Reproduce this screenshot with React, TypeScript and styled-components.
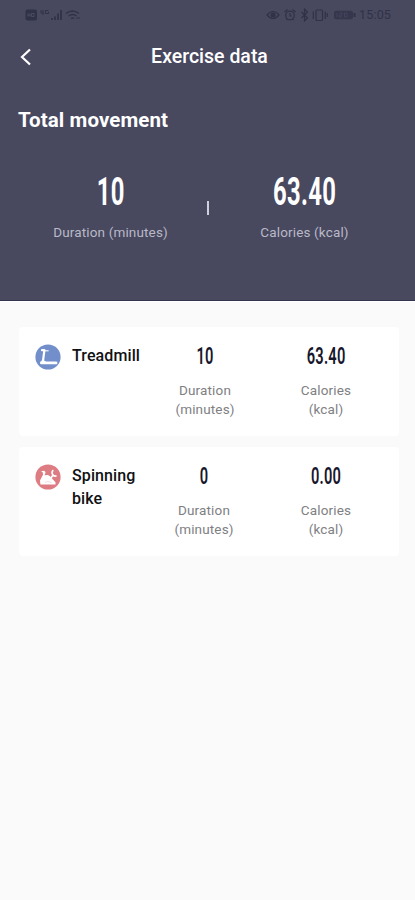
import React from 'react';
import styled, { createGlobalStyle } from 'styled-components';

const Global = createGlobalStyle`
  * { box-sizing: border-box; }
  body { margin: 0; background: #fafafa; font-family: Roboto, "Liberation Sans", sans-serif; }
`;

const Page = styled.main`
  width: 415px;
  height: 900px;
  overflow: hidden;
  background: #fafafa;
`;

const Header = styled.header`
  height: 301px;
  background: #48485f;
  border-bottom: 1px solid #34344f;
  color: #fff;
`;

const StatusBar = styled.div`
  height: 30px;
  padding: 0 24px 0 25px;
  display: flex;
  align-items: center;
  justify-content: space-between;
  color: #303247;
`;

const Clock = styled.span`
  font-size: 12.5px;
  line-height: 30px;
  letter-spacing: 0.15px;
`;

const StatusGroup = styled.div`
  display: flex;
  align-items: center;
`;

const NavBar = styled.nav`
  height: 54px;
  display: grid;
  grid-template-columns: 52px 1fr 48px;
  align-items: center;
`;

const BackButton = styled.button`
  border: 0;
  padding: 0 0 0 19px;
  background: none;
  display: flex;
`;

const Title = styled.h1`
  margin: 0;
  font-size: 19.5px;
  line-height: 26px;
  font-weight: 500;
  text-align: center;
`;

const SectionTitle = styled.h2`
  margin: 22px 0 0 18px;
  font-size: 20.5px;
  line-height: 28px;
  font-weight: 700;
  letter-spacing: 0.1px;
`;

const Totals = styled.div`
  margin-top: 37px;
  padding: 0 16px 0 14px;
  display: grid;
  grid-template-columns: 193px 3px 1fr;
  align-items: center;
`;

const Divider = styled.span`
  width: 2px;
  height: 14px;
  margin-top: 3px;
  background: #d0d0dc;
`;

const Total = styled.div`
  text-align: center;
`;

const Value = styled.div<{ $size: number; $line: number }>`
  font-size: ${(p) => p.$size}px;
  line-height: ${(p) => p.$line}px;
  font-weight: ${(p) => (p.$size > 30 ? 700 : 600)};
  letter-spacing: ${(p) => p.$size * 0.015}px;
  text-indent: ${(p) => p.$size * 0.015}px;
  transform: scaleX(0.61);
`;

const TotalLabel = styled.div`
  margin-top: 10px;
  font-size: 13.5px;
  line-height: 18px;
  letter-spacing: 0.15px;
  color: #b9b9c7;
  white-space: nowrap;
`;

const List = styled.section`
  padding: 25px 16px 0 19px;
  display: flex;
  flex-direction: column;
  gap: 11px;
  border-top: 1px solid #fff;
`;

const Card = styled.article`
  height: 109px;
  padding: 17px 4px 0 16px;
  display: grid;
  grid-template-columns: 37px 79px 106px 1fr;
  border-radius: 4px;
  background: #fff;
`;

const Name = styled.h3`
  margin: 0;
  font-size: 16px;
  line-height: 23px;
  font-weight: 500;
  letter-spacing: 0.1px;
  color: #111114;
`;

const Metric = styled.div<{ $shift?: number }>`
  text-align: center;
  color: #17172c;
  padding-left: ${(p) => p.$shift || 0}px;
`;

const MetricLabel = styled.div`
  margin-top: 13px;
  font-size: 13.5px;
  line-height: 18.5px;
  letter-spacing: 0.15px;
  color: #808083;
`;

const IconBox = styled.div`
  padding-top: 0;
`;

function NetworkIcons() {
  return (
    <svg width="58" height="16" viewBox="0 0 58 16" fill="none" stroke="currentColor">
      <rect x="0.5" y="2.5" width="11.5" height="11" rx="2" fill="currentColor" stroke="none" />
      <path d="M3 6.5v3M5 6.5v3M3 8h2M6.5 9.5v-3h2.5v3z" stroke="#50516a" strokeWidth="0.8" />
      <path d="M16 3v3h2.5M18 3v5M23.5 3.5h-3v3h3V5" strokeWidth="1" />
      <path d="M27 13v-2M30 13V9.5M33 13V6.5M36 13V3" strokeWidth="1.8" />
      <path d="M41 6.5q6.5-5 13 0M43.5 9q4-3 8 0M46 11.5q1.5-1.2 3 0" strokeWidth="1.5" />
      <path d="M52 12v-2M54 10v2" />
    </svg>
  );
}

function DeviceIcons() {
  return (
    <svg width="93" height="16" viewBox="0 0 93 16" fill="none" stroke="currentColor" strokeWidth="1.2">
      <path d="M1 8q6-7 12 0q-6 7-12 0z" />
      <circle cx="7" cy="8" r="2" fill="currentColor" />
      <circle cx="24" cy="8.5" r="4.3" />
      <path d="M18.5 5l3-2.5M29.5 5l-3-2.5M24 6v3h2M20.5 13l1-1M27.5 13l-1-1" />
      <path d="M35.5 5l6 6-3 2.8V2.2l3 2.8-6 6" />
      <rect x="50" y="3" width="6.5" height="10.5" rx="1" />
      <path d="M47.3 4.5v7.5M59.3 4.5v7.5M61.3 6v4" />
      <rect x="68" y="3.7" width="19" height="8.6" rx="2" fill="currentColor" stroke="none" opacity="0.75" />
      <path d="M88.5 6v4" strokeWidth="2" />
      <path d="M71 6v4M73.5 6h2.5v2h-2.5v2H76M78.5 6H81v4h-2.5z" stroke="#48485f" strokeWidth="0.8" />
    </svg>
  );
}

function TreadmillIcon() {
  return (
    <svg width="26" height="26" viewBox="0 0 26 26">
      <circle cx="13" cy="13" r="12.6" fill="#728fcb" />
      <path d="M7 6.2h2.4L8 17" fill="none" stroke="#fff" strokeWidth="2.2" strokeLinecap="round" strokeLinejoin="round" />
      <path d="M10 6.8h3.6" stroke="#fff" strokeWidth="1.1" />
      <path d="M5 18.6q.6-2.2 2.8-2.4 2 .2 3.2 1.4h10q1.4 0 1.4 1.4t-1.2 1.3H6q-1.3 0-1-1.7z" fill="#fff" />
    </svg>
  );
}

function BikeIcon() {
  return (
    <svg width="26" height="26" viewBox="0 0 26 26">
      <circle cx="13" cy="13" r="12.6" fill="#dd7c82" />
      <path d="M6 7.2l3.2-.5q1.8 1 1.2 2.6l-.9 2 3.2-.2q2.4.6 3.8 2.9l4 4.2v2.3H5.4l-.4-3.9 1.7-3.4 1.3-2.4-.2-2.2z" fill="#fff" />
      <path d="M17.8 6.5q-1.6 2.5 0 4.3 1.7 1.6 3.2 1.2M18 11l-2.5 3.8" fill="none" stroke="#fff" strokeWidth="1.6" strokeLinecap="round" />
      <path d="M10 18.3q3-2 6.5.5" fill="none" stroke="#edbabd" strokeWidth="0.5" />
    </svg>
  );
}

const activities = [
  { name: 'Treadmill', Icon: TreadmillIcon, minutes: '10', kcal: '63.40', shift: 2 },
  { name: 'Spinning bike', Icon: BikeIcon, minutes: '0', kcal: '0.00', shift: 0 },
];

export default function App() {
  return (
    <Page>
      <Global />
      <Header>
        <StatusBar>
          <NetworkIcons />
          <StatusGroup>
            <DeviceIcons />
            <Clock>15:05</Clock>
          </StatusGroup>
        </StatusBar>
        <NavBar>
          <BackButton aria-label="Back">
            <svg width="14" height="20" viewBox="0 0 14 20" fill="none" stroke="#fff" strokeWidth="2.2">
              <path d="M11 2.5L3 10l8 7.5" />
            </svg>
          </BackButton>
          <Title>Exercise data</Title>
        </NavBar>
        <SectionTitle>Total movement</SectionTitle>
        <Totals>
          <Total>
            <Value $size={39} $line={42}>10</Value>
            <TotalLabel>Duration (minutes)</TotalLabel>
          </Total>
          <Divider />
          <Total>
            <Value $size={39} $line={42}>63.40</Value>
            <TotalLabel>Calories (kcal)</TotalLabel>
          </Total>
        </Totals>
      </Header>
      <List>
        {activities.map(({ name, Icon, minutes, kcal, shift }) => (
          <Card key={name}>
            <IconBox><Icon /></IconBox>
            <Name>{name}</Name>
            <Metric $shift={shift}>
              <Value $size={24} $line={24}>{minutes}</Value>
              <MetricLabel>Duration<br />(minutes)</MetricLabel>
            </Metric>
            <Metric>
              <Value $size={24} $line={24}>{kcal}</Value>
              <MetricLabel>Calories<br />(kcal)</MetricLabel>
            </Metric>
          </Card>
        ))}
      </List>
    </Page>
  );
}
